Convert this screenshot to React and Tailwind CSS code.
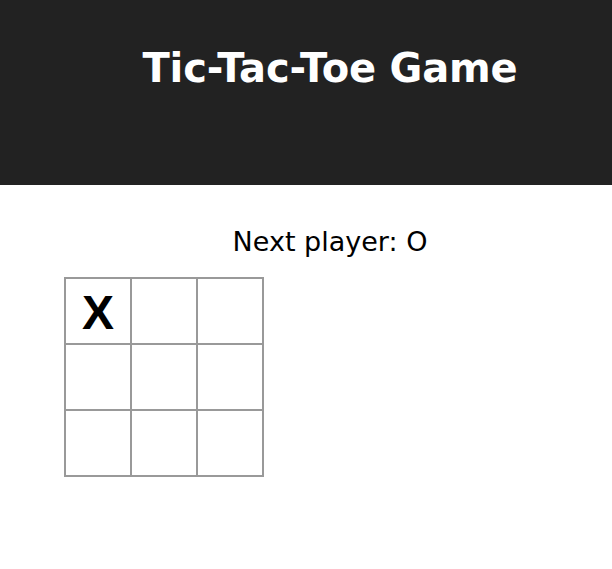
export default function App() {
  const squares = ["X", null, null, null, null, null, null, null, null];
  const rows = [0, 1, 2];
  return (
    <div className="min-h-[569px] bg-white" style={{ fontFamily: '"DejaVu Sans", sans-serif' }}>
      <header className="h-[185px] bg-[#222222] pl-[48px] flex justify-center pt-[44px]">
        <h1 className="text-white font-bold text-[40px] leading-[48px] h-[48px] tracking-[-0.2px]">Tic-Tac-Toe Game</h1>
      </header>
      <div className="pl-[48px] flex justify-center pt-[40px]">
        <div className="text-black text-[27px] leading-[34px]">Next player: O</div>
      </div>
      <div className="pl-[64px] pt-[18px]">
        {rows.map((r) => (
          <div key={r} className="flex -mt-[2px] first:mt-0">
            {[0, 1, 2].map((c) => (
              <div
                key={c}
                className="w-[68px] h-[68px] -mr-[2px] border-2 border-[#999999] flex items-center justify-center pt-[3px] font-bold text-[48px] leading-none text-black"
                style={{ fontFamily: '"Liberation Sans", Arial, sans-serif' }}
              >
                {squares[r * 3 + c]}
              </div>
            ))}
          </div>
        ))}
      </div>
    </div>
  );
}
